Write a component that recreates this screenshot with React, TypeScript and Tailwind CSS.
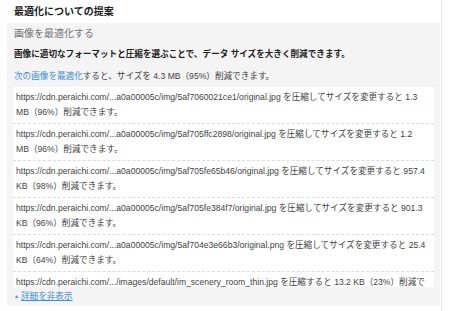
const rows = [
  {
    url: "https://cdn.peraichi.com/...a0a00005c/img/5af7060021ce1/original.jpg",
    action: "を圧縮してサイズを変更すると",
    saving: "1.3 MB（96%）",
  },
  {
    url: "https://cdn.peraichi.com/...a0a00005c/img/5af705ffc2898/original.jpg",
    action: "を圧縮してサイズを変更すると",
    saving: "1.2 MB（96%）",
  },
  {
    url: "https://cdn.peraichi.com/...a0a00005c/img/5af705fe65b46/original.jpg",
    action: "を圧縮してサイズを変更すると",
    saving: "957.4 KB（98%）",
  },
  {
    url: "https://cdn.peraichi.com/...a0a00005c/img/5af705fe384f7/original.jpg",
    action: "を圧縮してサイズを変更すると",
    saving: "901.3 KB（96%）",
  },
  {
    url: "https://cdn.peraichi.com/...a0a00005c/img/5af704e3e66b3/original.png",
    action: "を圧縮してサイズを変更すると",
    saving: "25.4 KB（64%）",
  },
  {
    url: "https://cdn.peraichi.com/.../images/default/im_scenery_room_thin.jpg",
    action: "を圧縮すると",
    saving: "13.2 KB（23%）",
  },
];

export default function App() {
  return (
    <div
      className="h-[311px] w-[450px] overflow-hidden bg-white text-[#212121]"
      style={{ fontFamily: '"Liberation Sans", "Noto Sans CJK JP", sans-serif' }}
    >
      <div className="h-full w-[442px] border-r border-[#e3e3e3] pl-[7px] pr-[1px]">
        <h2 className="flex h-[23px] items-center pl-[7px] text-[10px] font-bold leading-none">
          最適化についての提案
        </h2>

        <section className="h-[283px] bg-[#f4f4f4] px-[6px] pt-[1px]">
          <div className="flex h-[19px] items-center pl-[1px] text-[10px] text-[#757575]">
            画像を最適化する
          </div>
          <p className="mt-[3px] flex h-[16px] items-center pl-[1px] text-[8.6px] font-bold">
            画像に適切なフォーマットと圧縮を選ぶことで、データ サイズを大きく削減できます。
          </p>
          <p className="mt-[6px] flex h-[16px] items-center pl-[1px] text-[8.6px] text-[#424242]">
            <span className="text-[#3d8fe0]">次の画像を最適化</span>
            すると、サイズを 4.3 MB（95%）削減できます。
          </p>

          <div className="mt-[3px] h-[200px] overflow-hidden bg-white">
            {rows.map((row, i) => (
              <div
                key={row.url}
                className={
                  "py-[3px] pl-[3px] pr-[7px] text-[8.6px] leading-[15px] text-[#424242] " +
                  (i > 0 ? "border-t border-dashed border-[#dcdcdc]" : "")
                }
              >
                {row.url} {row.action} {row.saving}削減できます。
              </div>
            ))}
          </div>

          <div className="mt-[2px] flex h-[15px] items-center gap-[2px] pl-[1px] text-[8.6px]">
            <span className="text-[5px] leading-none text-[#3d8fe0]">▲</span>
            <a href="#" className="text-[#3d8fe0] underline">
              詳細を非表示
            </a>
          </div>
        </section>
      </div>
    </div>
  );
}
